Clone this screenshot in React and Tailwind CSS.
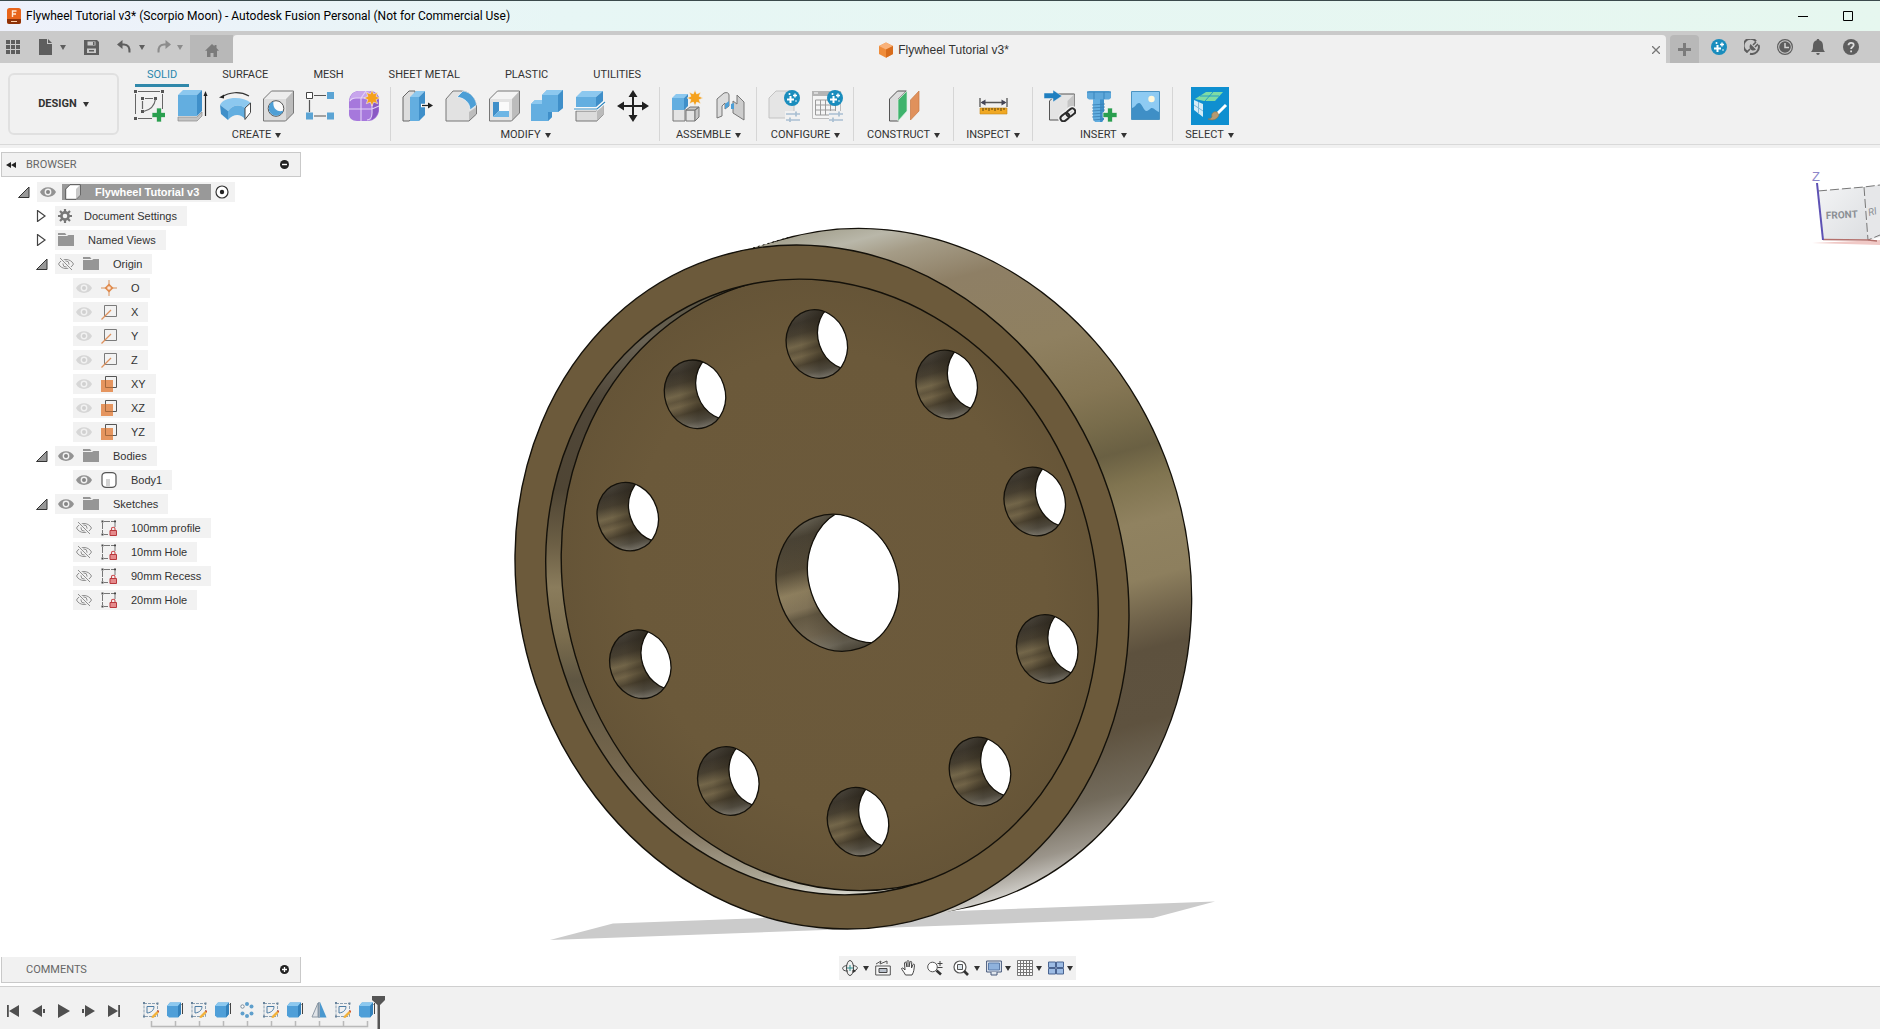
import { useState } from "react";

const BLUE = "#63aee0";
const BLUE_TOP = "#8cc8ef";
const BLUE_SIDE = "#3f8fc9";

function Caret({ className = "text-[#333]" }) {
  return (
    <svg viewBox="0 0 6 5" className={`h-[5px] w-[6px] shrink-0 ${className}`} fill="currentColor">
      <path d="M0 0h6L3 5z" />
    </svg>
  );
}

function Icon({ size = "size-8", box = 32, children }) {
  return (
    <svg viewBox={`0 0 ${box} ${box}`} className={`${size} shrink-0`} fill="none">
      {children}
    </svg>
  );
}

const Star = ({ x, y }) => (
  <g transform={`translate(${x} ${y})`}>
    <path
      d="M0-8 1.7-4.1 5.7-5.7 4.1-1.7 8 0 4.1 1.7 5.7 5.7 1.7 4.1 0 8-1.7 4.1-5.7 5.7-4.1 1.7-8 0-4.1-1.7-5.7-5.7-1.7-4.1z"
      fill="#f5a11c"
      stroke="#f1f1f1"
      strokeWidth=".6"
    />
  </g>
);

const Plus = ({ x, y }) => (
  <path
    transform={`translate(${x} ${y})`}
    d="M-2.5-7h5v4.500h4.500v5h-4.500v4.500h-5v-4.500h-4.500v-5h4.500z"
    fill="#2a9f4f"
    stroke="#f1f1f1"
    strokeWidth=".7"
  />
);

const Sparkle = ({ x, y }) => (
  <g transform={`translate(${x} ${y})`}>
    <circle r="8" fill="#1a8dbd" />
    <path d="M-1.500-2v7M-5 1.500h7" stroke="#fff" strokeWidth="2" />
    <path d="M3-4.500v4M1-2.500h4" stroke="#fff" strokeWidth="1.400" />
    <circle cx="-2.500" cy="-4" r="1" fill="#fff" />
    <circle cx="4" cy="3" r=".8" fill="#fff" />
  </g>
);

const Sliders = () => (
  <path d="M18 24h14M18 30h14M28 21.500v5M22 27.500v5" stroke="#a9bfd2" strokeWidth="1.700" />
);

/* toolbar icons */
const CreateSketch = () => (
  <Icon>
    <path d="M5 1.500h22M2.500 4v20M29.500 4v15M5 28.500h14" stroke="#666" strokeWidth="1" />
    <path d="M1 0h3v3H1zM28 0h3v3h-3zM1 27h3v3H1zM8 7h3v3H8zM21 7h3v3h-3zM8 20h3v3H8z" fill="#555" />
    <path d="M12 8.500h8M9.500 11v8M22.500 9c-1 7-5 11-12 12.500" stroke="#666" strokeWidth="1.2" />
    <Plus x={26} y={25} />
  </Icon>
);

const Extrude = () => (
  <Icon>
    <path d="m2 27 19 0 5-5v4l-5 5H2z" fill="#c3c3c3" stroke="#8a8a8a" strokeWidth=".7" />
    <path d="M2 5h19v21H2z" fill={BLUE} />
    <path d="m2 5 5-5h19l-5 5z" fill={BLUE_TOP} />
    <path d="m21 5 5-5v21l-5 5z" fill={BLUE_SIDE} />
    <path d="M29.500 26V5" stroke="#222" strokeWidth="1.200" />
    <path d="m27.500 6 2-5 2 5z" fill="#222" />
  </Icon>
);

const Revolve = () => (
  <Icon>
    <path d="M3 7c7-5 18-6 27-1" stroke="#333" strokeWidth="1.200" />
    <path d="m0 7.500 5-3 0 4z" fill="#222" />
    <path d="M1 15c3-8 22-10 31-2l-6 5c-6-4-12-3-17 3z" fill={BLUE_TOP} />
    <path d="m1 15 8 6v9L2 24z" fill={BLUE_SIDE} />
    <path d="M9 21c5-6 11-7 17-3v11c-5-6-12-5-17 1z" fill={BLUE} />
    <path d="m26 18 5.500-5v9.500l-5.500 7z" fill="#fff" stroke="#444" />
  </Icon>
);

const Hole = () => (
  <Icon>
    <path d="m1.500 9 8-8h22l-8 7.500z" fill="#ededed" />
    <path d="m24 9 7.500-8v22l-7.500 8z" fill="#bcbcbc" />
    <path d="M1.500 9H24v22H1.500z" fill="#dcdcdc" />
    <path d="m1.500 9 8-8h22v22l-8 8h-22z" stroke="#777" />
    <circle cx="14" cy="18.500" r="7.800" fill="#fafafa" stroke="#555" />
    <path d="M11.500 11.200a7.500 7.500 0 1 0 9.800 9.500c-6 2-11-2.500-9.800-9.500z" fill="#4d9fd6" />
  </Icon>
);

const Pattern = () => (
  <Icon>
    <path d="M9 5.500h12M4.500 10v12M9 26h12" stroke="#555" strokeWidth="1.200" />
    <path d="M1.500 2.500h6v6h-6z" fill="#fff" stroke="#444" />
    <path d="M22 2h7v7h-7zM1 22.500h7v7H1zM22 22.500h7v7h-7z" fill="#5ba4d4" />
  </Icon>
);

const Form = () => (
  <Icon>
    <path d="M1 12c0-6 3-10 9-11h12c5 0 9 3 9 9v10c0 6-5 11-11 11H9c-5 0-8-3-8-7z" fill="#a678dc" />
    <path d="M1.500 12c0-6 3-10 9-11h12l-4 7H8c-3 0-5 2-6.500 4z" fill="#c7a5ec" />
    <path d="M24 11c3-1 5-3 6.500-5v15c-1 4-3 7-7 9z" fill="#8a58c4" />
    <path d="M2 11c1-2 3-3 6-3h11c4 0 5 2 5 5v10c0 4-2 7-5 7M13 8v23M1 19h23l7-3M13 8l5-7" stroke="#e4d3f7" strokeWidth="1.100" />
    <Star x={24} y={8} />
  </Icon>
);

const PressPull = () => (
  <Icon>
    <path d="m1 7 6-6h6v26l-6 4H1z" fill="#ddd" stroke="#666" />
    <path d="M8 7h9v24H8z" fill={BLUE} />
    <path d="m8 7 6-6h9l-6 6z" fill={BLUE_TOP} />
    <path d="m17 7 6-6v24l-6 6z" fill={BLUE_SIDE} />
    <path d="M19 15.500h7" stroke="#fff" strokeWidth="3.500" />
    <path d="M20 15.500h7" stroke="#222" strokeWidth="1.300" />
    <path d="m26 12.500 5 3-5 3z" fill="#222" />
  </Icon>
);

const Fillet = () => (
  <Icon>
    <path d="M1 31V9l7-8h8c9 0 15 8 15.500 16v7L24 31z" fill="#e2e2e2" />
    <path d="m24 31 7.500-7v-7L24 22z" fill="#bdbdbd" />
    <path d="M1 31V9l7-8h8c9 0 15 8 15.500 16v7L24 31z" stroke="#777" />
    <path d="m12 7 6-6c8 1 13 8 13.500 14L25 20C25 12 19 8 12 7z" fill="#4d9fd6" stroke="#fff" strokeWidth=".6" />
  </Icon>
);

const Shell = () => (
  <Icon>
    <path d="m1.500 9 8-8h22l-8 8z" fill="#f4f4f4" />
    <path d="m24 9 7.500-8v22L24 31z" fill="#bcbcbc" />
    <path d="M1.500 9H24v22H1.500z" fill="#e3e3e3" />
    <path d="m1.500 9 8-8h22v22l-8 8h-22z" stroke="#777" />
    <path d="M5 12h16v15H5z" fill="#fafafa" />
    <path d="m5 12 6 0v9l-6 6z" fill="#3f8fc9" />
    <path d="m5 27 6-6h10v6z" fill="#6db6e5" />
  </Icon>
);

const Combine = () => (
  <Icon>
    <path d="m0 14 4-4h7V5l5-5h16v18l-5 4h-6v5l-4 4H0z" fill={BLUE} />
    <path d="m11 5 5-5h16l-5 5zM0 14l4-4h7v4z" fill={BLUE_TOP} />
    <path d="m27 5 5-5v18l-5 4zM17 22h4v5l-4 4z" fill={BLUE_SIDE} />
  </Icon>
);

const SplitBody = () => (
  <Icon>
    <path d="M2 21h20l7-6v10l-6 6H2z" fill="#dcdcdc" stroke="#777" />
    <path d="m23 21 6-5v9l-6 6z" fill="#bbb" />
    <path d="M2 7h20v10H2z" fill={BLUE} />
    <path d="m2 7 6-6h21l-7 6z" fill={BLUE_TOP} />
    <path d="m22 7 7-6v10l-7 6z" fill={BLUE_SIDE} />
    <path d="M0 19h23l8-7" stroke="#fff" strokeWidth="3" />
    <path d="M0 19h23l8-7" stroke="#3187bd" strokeWidth="1.200" />
  </Icon>
);

const Move = () => (
  <Icon>
    <path d="M16 5v22M5 16h22" stroke="#222" strokeWidth="2" />
    <path d="m16 0 4.500 7h-9zM16 32l4.500-7h-9zM0 16l7-4.500v9zM32 16l-7-4.500v9z" fill="#222" />
  </Icon>
);

const NewComponent = () => (
  <Icon>
    <path d="M2 17h12v14H2zM15 20h9v11h-9z" fill="#e4e4e4" stroke="#777" />
    <path d="m15 20 4-3h9l-4 3zM24 20l4-3v10l-4 4z" fill="#c6c6c6" stroke="#777" />
    <path d="M1 8h12v12H1z" fill={BLUE} />
    <path d="m1 8 4-4h12l-4 4z" fill={BLUE_TOP} />
    <path d="m13 8 4-4v12l-4 4z" fill={BLUE_SIDE} />
    <Star x={24} y={8} />
  </Icon>
);

const Joint = () => (
  <Icon>
    <path d="M3 28V9l7-6c3-1 5 0 5 2v11l-4 3v-6l-3 3v10z" fill="#dcdcdc" stroke="#777" />
    <path d="m11 14 4-3v5l-4 3z" fill="#4d9fd6" />
    <path d="M30 30V12l-7-7v9l-4-3v12z" fill="#cdcdcd" stroke="#777" />
    <path d="m17 14 3-1v6l-3 0z" fill="#4d9fd6" />
  </Icon>
);

const ConfigureBody = () => (
  <Icon>
    <path d="M1 28V8l7-7h18v20l-7 7z" fill="#e5e5e5" stroke="#c3c3c3" />
    <Sparkle x={24} y={8} />
    <path d="M17 21h15v11H17z" fill="#f1f1f1" />
    <Sliders />
  </Icon>
);

const ConfigureTable = () => (
  <Icon>
    <path d="M1.500 1.500h28v27h-28z" fill="#f5f5f5" stroke="#bdbdbd" />
    <path d="M1 1h29v5H1z" fill="#b5b5b5" />
    <path d="M3 3h4" stroke="#fff" />
    <path d="M4.500 10h20v15h-20zM4.500 15h20M4.500 20h20M9.500 10v15M14.500 10v15M19.500 10v15" stroke="#9b9b9b" />
    <Sparkle x={24} y={8} />
    <path d="M18 21h14v11H18z" fill="#f1f1f1" />
    <Sliders />
  </Icon>
);

const OffsetPlane = () => (
  <Icon>
    <path d="M1.500 31V9l8-8h9l-8 8v22z" fill="#ddd" stroke="#555" />
    <path d="m10 10 9-9v20l-9 10z" fill="#3fb36c" stroke="#d8f0e0" strokeWidth=".7" />
    <path d="m22.500 10 8.500-9v20l-8.500 9z" fill="#e0915c" stroke="#c77842" strokeWidth=".7" />
  </Icon>
);

const Measure = () => (
  <Icon>
    <path d="M3 8v9M30 8v9M5 12.500h23" stroke="#555" strokeWidth="1.300" />
    <path d="m3.500 12.500 5-3v6zM29.500 12.500l-5-3v6z" fill="#445" />
    <path d="M3 18h27v6H3z" fill="#f0a823" stroke="#c8861a" strokeWidth=".6" />
    <path d="M6 18v3M9 18v2M12 18v3M15 18v2M18 18v3M21 18v2M24 18v3M27 18v2" stroke="#5a430f" />
  </Icon>
);

const InsertLink = () => (
  <Icon>
    <path d="m5.500 11 7-7h18v18l-7 8h-18z" fill="#e4e4e4" stroke="#555" />
    <path d="m23.500 11 7-7v18l-7 8z" fill="#c5c5c5" />
    <path d="M0 3h9V0l9 6-9 6V8.500H0z" fill="#1f7fc0" stroke="#f1f1f1" strokeWidth=".5" />
    <g transform="rotate(-38 24 25)" stroke="#f1f1f1" strokeWidth="5">
      <rect x="15.500" y="21.800" width="9" height="6" rx="3" />
      <rect x="23.500" y="21.800" width="9" height="6" rx="3" />
    </g>
    <g transform="rotate(-38 24 25)" stroke="#2b2b2b" strokeWidth="2">
      <rect x="15.500" y="21.800" width="9.500" height="6" rx="3" />
      <rect x="23" y="21.800" width="9.500" height="6" rx="3" />
    </g>
  </Icon>
);

const Fastener = () => (
  <Icon>
    <path d="M6 9h11v20l-2 3H8l-2-3z" fill={BLUE} />
    <path d="M13 9h4v20l-2 3h-2z" fill={BLUE_SIDE} />
    <path d="m5 15 13-1M5 18l13-1M5 21l13-1M5 24l13-1M5 27l13-1M6 30l11-1" stroke="#3a7fb2" strokeWidth=".8" />
    <path d="m0 2 2-1h20l2 1v6l-2 1.500H2L0 8z" fill="#5fa8da" />
    <path d="M0 2h24M7 2v7M17 2v7" stroke="#3a86bd" />
    <Plus x={23} y={25} />
  </Icon>
);

const InsertImage = () => (
  <Icon>
    <path d="M1.500 1.500h28v28h-28z" fill="#8ecbf3" stroke="#4b93c2" />
    <path d="M2 18c4-1 4-5 7-5s5 9 8 8 3-3 5-3 4 3 7 4v7H2z" fill="#3f8fc6" />
    <circle cx="21.500" cy="9" r="3.200" fill="#fff8dc" />
  </Icon>
);

const SelectTool = () => (
  <Icon size="size-[38px]" box={38}>
    <path d="M0 0h38v38H0z" fill="#0f8fd0" />
    <path d="m4 12 11-7h17l-8 9H13z" fill="#7fdca4" />
    <path d="m9 9 19 0M22 5l-8 9" stroke="#0f8fd0" strokeWidth=".8" />
    <path d="m3 13 9 4v13l-9-7z" fill="#d5ecf7" />
    <path d="m3 18 9 6M7.500 15v12" stroke="#7fb7d6" />
    <path d="M35 18 26 27" stroke="#fff" strokeWidth="3" />
    <path d="M26 25c-4-1-6 2-5 5-1 1-2 2-4 2 4 2 9 1 11-4z" fill="#b59a72" stroke="#8f7549" strokeWidth=".6" />
  </Icon>
);

const tabs = ["SOLID", "SURFACE", "MESH", "SHEET METAL", "PLASTIC", "UTILITIES"];

const WIDE = "pl-[11px] pr-[10px]";
const NARROW = "px-3";

const groups = [
  {
    label: "CREATE",
    pad: "pl-[5px] pr-[10px]",
    tools: [
      ["Create Sketch", CreateSketch],
      ["Extrude", Extrude],
      ["Revolve", Revolve],
      ["Hole", Hole],
      ["Rectangular Pattern", Pattern],
      ["Create Form", Form],
    ],
  },
  {
    label: "MODIFY",
    pad: WIDE,
    tools: [
      ["Press Pull", PressPull],
      ["Fillet", Fillet],
      ["Shell", Shell],
      ["Combine", Combine],
      ["Split Body", SplitBody],
      ["Move/Copy", Move],
    ],
  },
  { label: "ASSEMBLE", pad: WIDE, tools: [["New Component", NewComponent], ["Joint", Joint]] },
  { label: "CONFIGURE", pad: WIDE, tools: [["Create Configuration", ConfigureBody], ["Configuration Table", ConfigureTable]] },
  { label: "CONSTRUCT", pad: "px-[13px]", tools: [["Offset Plane", OffsetPlane]] },
  { label: "INSPECT", pad: NARROW, tools: [["Measure", Measure]] },
  { label: "INSERT", pad: WIDE, tools: [["Insert Derive", InsertLink], ["Insert Fastener", Fastener], ["Canvas", InsertImage]] },
  { label: "SELECT", pad: NARROW, tools: [["Select", SelectTool]] },
];

function TitleBar() {
  return (
    <header className="flex h-[31px] shrink-0 items-center border-t border-[#3b4a4c] bg-linear-to-r from-[#eef1fb] via-[#e7f6f5] via-30% to-[#e6f7ef] pr-[27px] pl-[7px]">
      <svg viewBox="0 0 14 16" className="mr-[5px] h-4 w-[14px]">
        <rect width="14" height="16" rx="2.500" fill="#e8641b" />
        <path d="M0 11h14v2.500A2.500 2.500 0 0 1 11.500 16h-9A2.500 2.500 0 0 1 0 13.500z" fill="#8f3208" />
        <path d="M5.500 9V3h4M5.500 6h3.500" stroke="#ffe9d6" strokeWidth="1.400" fill="none" />
        <path d="M4 13.500h6" stroke="#ffd1ad" />
      </svg>
      <h1 className="flex-1 font-['Roboto',sans-serif] text-[12px] leading-4 text-black">
        Flywheel Tutorial v3* (Scorpio Moon) - Autodesk Fusion Personal (Not for Commercial Use)
      </h1>
      <div className="flex gap-[35px] text-black">
        <button aria-label="Minimize">
          <Icon size="size-2.5" box={10}><path d="M0 5.500h10" stroke="currentColor" /></Icon>
        </button>
        <button aria-label="Maximize">
          <Icon size="size-2.5" box={10}><path d="M.5.500h9v9h-9z" stroke="currentColor" /></Icon>
        </button>
      </div>
    </header>
  );
}

function DocumentBar() {
  return (
    <div className="flex h-8 shrink-0 items-end bg-[#cacaca] text-[#5e5e5e]">
      <div className="flex w-[190px] shrink-0 items-center self-stretch pl-1.5">
        <button aria-label="Data Panel">
          <Icon size="size-[14px]" box={14}>
            <path d="M0 0h4v4H0zM5 0h4v4H5zM10 0h4v4h-4zM0 5h4v4H0zM5 5h4v4H5zM10 5h4v4h-4zM0 10h4v4H0zM5 10h4v4H5zM10 10h4v4h-4z" fill="currentColor" />
          </Icon>
        </button>
        <button aria-label="File" className="ml-[18px] flex items-center gap-1.5">
          <Icon size="size-4" box={16}>
            <path d="M1 0h8v5h5v11H1z" fill="currentColor" />
            <path d="m10 0 4 4h-4z" fill="currentColor" />
          </Icon>
          <Caret className="text-[#5e5e5e]" />
        </button>
        <button aria-label="Save" className="ml-[18px]">
          <Icon size="size-[15px]" box={15}>
            <path fillRule="evenodd" d="M0 0h13l2 2v13H0zM3.500 1.500v4h8v-4zM3 8.500V13h9V8.500zM9 2h1.500v3H9zM5 10h5v1.500H5z" fill="currentColor" />
          </Icon>
        </button>
        <button aria-label="Undo" className="ml-[18px] flex items-center gap-2">
          <Icon size="size-[14px]" box={14}>
            <path d="M3 4.500h4c4 0 6 3 5.500 8" stroke="currentColor" strokeWidth="2" />
            <path d="M0 4.500 5.500 0v9z" fill="currentColor" />
          </Icon>
          <Caret className="text-[#5e5e5e]" />
        </button>
        <button aria-label="Redo" className="ml-3 flex items-center gap-1.5 text-[#8c8c8c]">
          <Icon size="size-[14px]" box={14}>
            <path d="M11 4.500H7c-4 0-6 3-5.500 8" stroke="currentColor" strokeWidth="2" />
            <path d="M14 4.500 8.500 0v9z" fill="currentColor" />
          </Icon>
          <Caret className="text-[#8c8c8c]" />
        </button>
      </div>
      <button aria-label="Home" className="flex h-7 w-[43px] items-center justify-center bg-[#b8b8b8] pt-1 text-[#7b7b7b]">
        <Icon size="size-[14px]" box={14}>
          <path d="M7 0l2.500 2.300V1h2v3L14 6.700h-2V13H8.500V9h-3v4H2V6.700H0z" fill="currentColor" />
        </Icon>
      </button>
      <div className="flex h-7 min-w-0 flex-1 items-center rounded-t-sm bg-[#f1f1f1] pt-0.5 pr-1.5 pl-0.5">
        <div className="flex flex-1 items-center justify-center gap-1 text-[12px] leading-4 text-[#333]">
          <Icon size="size-4" box={16}>
            <path d="m1 4 7-3.500L15 4v8l-7 3.700L1 12z" fill="#ef8c3a" />
            <path d="m1 4 7-3.500L15 4 8 7.500z" fill="#f9b27a" />
            <path d="m8 7.500 7-3.500v8l-7 3.700z" fill="#d86c1c" />
          </Icon>
          <span>Flywheel Tutorial v3*</span>
        </div>
        <button aria-label="Close tab" className="text-[#777]">
          <Icon size="size-2" box={8}>
            <path d="m0 0 8 8M8 0 0 8" stroke="currentColor" strokeWidth="1.300" />
          </Icon>
        </button>
      </div>
      <button aria-label="New design" className="ml-1 flex h-7 w-[29px] items-center justify-center rounded-t-sm bg-[#b8b8b8] text-[#7b7b7b]">
        <Icon size="size-[13px]" box={13}>
          <path d="M6.500 0v13M0 6.500h13" stroke="currentColor" strokeWidth="3" />
        </Icon>
      </button>
      <div className="ml-3 flex items-center gap-[17px] self-stretch pr-[21px]">
        <button aria-label="Autodesk Assistant">
          <Icon size="size-4" box={16}><Sparkle x={8} y={8} /></Icon>
        </button>
        <button aria-label="Extensions">
          <Icon size="size-4" box={16}>
            <path d="M3.500 13A7 7 0 1 1 12 2.300M14.600 6A7 7 0 0 1 6 14.700" stroke="currentColor" strokeWidth="2" />
            <path d="M2.500 13.500 6 10M9 6l3-3M11 8l3-3" stroke="currentColor" strokeWidth="1.600" />
            <path d="m6.500 5 5.500 5.500c-3.500 3-8.500-1-5.500-5.500z" fill="currentColor" />
          </Icon>
        </button>
        <button aria-label="Job status">
          <Icon size="size-4" box={16}>
            <circle cx="8" cy="8" r="7.400" stroke="currentColor" strokeWidth="1.200" />
            <circle cx="8" cy="8" r="5.800" fill="currentColor" />
            <path d="M8 4v4.500h4" stroke="#d4d4d4" strokeWidth="1.500" />
          </Icon>
        </button>
        <button aria-label="Notifications">
          <Icon size="size-4" box={16}>
            <path d="M8 0c1 0 1.300.6 1.300 1.200C12 2 13 4 13 7c0 3 .5 4.500 2 6H1c1.500-1.500 2-3 2-6 0-3 1-5 3.700-5.800C6.700.6 7 0 8 0zM6.300 14h3.400c0 1.200-.7 2-1.700 2s-1.700-.8-1.700-2z" fill="currentColor" />
          </Icon>
        </button>
        <button aria-label="Help">
          <Icon size="size-4" box={16}>
            <circle cx="8" cy="8" r="8" fill="currentColor" />
            <path d="M5.500 6.300C5.500 3 10.700 3 10.700 6c0 1.900-2.600 2-2.600 4M8.100 11.500v1.700" stroke="#ddd" strokeWidth="1.800" />
          </Icon>
        </button>
      </div>
    </div>
  );
}

function Ribbon() {
  const [active, setActive] = useState("SOLID");

  return (
    <div className="flex h-[82px] shrink-0 border-b border-[#d9d9d9] bg-[#f1f1f1] font-['Roboto',sans-serif] text-[11px] leading-3 text-[#333]">
      <button className="mt-2.5 ml-2 flex h-[62px] w-[111px] shrink-0 items-center justify-center gap-1.5 rounded-md border-2 border-[#e0e0e0] font-bold">
        DESIGN
        <Caret />
      </button>
      <div className="ml-[9px] flex flex-col">
        <nav className="ml-[7px] flex h-6 gap-[21px]">
          {tabs.map((tab) => (
            <button
              key={tab}
              onClick={() => setActive(tab)}
              className={`flex items-center border-b-3 px-3 pt-0.5 ${
                active === tab ? "border-[#3088aa] text-[#2b87ad]" : "border-transparent"
              }`}
            >
              {tab}
            </button>
          ))}
        </nav>
        <div className="flex items-stretch">
          {groups.map((group, i) => (
            <div key={group.label} className={`flex h-[54px] flex-col items-center justify-between ${group.pad} ${i > 0 ? "border-l border-[#d6d6d6]" : ""}`}>
              <div className="flex h-9 items-center gap-[11px] pt-0.5">
                {group.tools.map(([name, Tool]) => (
                  <button key={name} aria-label={name}><Tool /></button>
                ))}
              </div>
              <button className="flex items-center gap-1 leading-3">
                {group.label}
                <Caret />
              </button>
            </div>
          ))}
        </div>
      </div>
    </div>
  );
}

/* browser tree icons */
const Eye = ({ faded }) => (
  <Icon size="size-4" box={16}>
    <path d="M0 8c3-6.500 13-6.500 16 0-3 6.500-13 6.500-16 0z" fill={faded ? "#d6d6d6" : "#939393"} />
    <circle cx="8" cy="8" r="3.400" fill="#f1f1f1" />
    <circle cx="8" cy="8" r="2" fill={faded ? "#d0d0d0" : "#858585"} />
  </Icon>
);

const EyeOff = () => (
  <Icon size="size-4" box={16}>
    <path d="M.5 8c3-6 12-6 15 0-3 6-12 6-15 0z" stroke="#8f8f8f" />
    <circle cx="8" cy="8" r="3" stroke="#8f8f8f" />
    <path d="m2 2 12 12" stroke="#f1f1f1" strokeWidth="3" />
    <path d="m2 2 12 12" stroke="#8f8f8f" />
  </Icon>
);

const Folder = () => (
  <Icon size="size-4" box={16}>
    <path d="M0 1h7l1.500 2H0zM0 4h9l1.500-1H16v11H0z" fill="#969696" />
  </Icon>
);

const Gear = () => (
  <Icon size="size-[14px]" box={14}>
    <circle cx="7" cy="7" r="3.600" stroke="#777" strokeWidth="2.600" />
    <path d="M7 0v3M7 11v3M0 7h3M11 7h3M2 2l2.200 2.200M9.800 9.800 12 12M12 2 9.800 4.200M4.200 9.800 2 12" stroke="#777" strokeWidth="2.200" />
  </Icon>
);

const Component = () => (
  <Icon size="size-4" box={16}>
    <path d="M.7 5 5 .7h10.300V11L11 15.300H.7z" fill="#fff" stroke="#555" strokeLinejoin="round" />
    <path d="m11 5 4-4v10l-4 4z" fill="#c9c9c9" />
  </Icon>
);

const OriginPoint = () => (
  <Icon size="size-4" box={16}>
    <path d="M8 0v16M0 8h16" stroke="#d8935f" />
    <path d="m8 3.500 4.500 4.500L8 12.500 3.500 8z" fill="#e08a4c" />
    <circle cx="8" cy="8" r="1.800" fill="#fbe6d6" />
  </Icon>
);

const Axis = () => (
  <Icon size="size-4" box={16}>
    <path d="M3.500 1.500h12v11h-12z" stroke="#7b7b7b" />
    <path d="M.5 15.500 10 6" stroke="#dd915c" strokeWidth="1.200" />
  </Icon>
);

const Plane = () => (
  <Icon size="size-4" box={16}>
    <path d="M0 4h12v12H0z" fill="#e5955f" />
    <path d="M4.500 4V.5h11v11H12" stroke="#555" />
    <path d="M4.500 4v7.500H12" stroke="#a4683c" />
  </Icon>
);

const Body = () => (
  <Icon size="size-4" box={16}>
    <path d="M1 4c0-2 2-3.300 4-3.300h6c2 0 4 1.300 4 3.300v8c0 2-2 3.300-4 3.300H5c-2 0-4-1.300-4-3.300z" fill="#fff" stroke="#555" strokeWidth="1.200" />
    <path d="M5 7h4v8H5z" fill="#d3d3d3" />
  </Icon>
);

const LockedSketch = () => (
  <Icon size="size-4" box={16}>
    <path d="M3 1.500h10M1.500 3v10M14 3v4M3 14.500h4" stroke="#777" strokeDasharray="6 1" />
    <path d="M.5.500h2v2h-2zM13 .5h2v2h-2zM.5 13.500h2v2h-2z" fill="#444" />
    <path d="M10.500 11V8.800c0-2 3.500-2 3.500 0V11" stroke="#c9474a" strokeWidth="1.100" />
    <path d="M9 10.500h6.500v5H9z" fill="#e58a8c" stroke="#b8393d" />
  </Icon>
);

const Expanded = () => (
  <Icon size="size-3" box={12}>
    <path d="M.5 11.500 11 1v10.500z" fill="#999" stroke="#333" />
  </Icon>
);

const Collapsed = () => (
  <Icon size="size-3" box={12}>
    <path d="M1.500.5 9 6l-7.500 5.500z" fill="#fff" stroke="#444" strokeWidth="1.200" />
  </Icon>
);

const tree = [
  { label: "Document Settings", level: 1, open: false, icon: Gear },
  { label: "Named Views", level: 1, open: false, icon: Folder },
  { label: "Origin", level: 1, open: true, eye: "off", icon: Folder },
  { label: "O", level: 2, eye: "faded", icon: OriginPoint },
  { label: "X", level: 2, eye: "faded", icon: Axis },
  { label: "Y", level: 2, eye: "faded", icon: Axis },
  { label: "Z", level: 2, eye: "faded", icon: Axis },
  { label: "XY", level: 2, eye: "faded", icon: Plane },
  { label: "XZ", level: 2, eye: "faded", icon: Plane },
  { label: "YZ", level: 2, eye: "faded", icon: Plane },
  { label: "Bodies", level: 1, open: true, eye: "on", icon: Folder },
  { label: "Body1", level: 2, eye: "on", icon: Body },
  { label: "Sketches", level: 1, open: true, eye: "on", icon: Folder },
  { label: "100mm profile", level: 2, eye: "off", icon: LockedSketch },
  { label: "10mm Hole", level: 2, eye: "off", icon: LockedSketch },
  { label: "90mm Recess", level: 2, eye: "off", icon: LockedSketch },
  { label: "20mm Hole", level: 2, eye: "off", icon: LockedSketch },
];

function TreeRow({ item }) {
  const ItemIcon = item.icon;
  return (
    <li className={`flex items-center ${item.level === 1 ? "pl-9" : "pl-[73px]"}`}>
      {item.level === 1 && (
        <button aria-label={`Toggle ${item.label}`} className="mr-[7px]">
          {item.open ? <Expanded /> : <Collapsed />}
        </button>
      )}
      <div className="flex h-5 items-center bg-[#f2f2f2] pr-2.5 pl-[3px]">
        {item.eye && (
          <button aria-label={`Visibility of ${item.label}`} className="mr-[9px]">
            {item.eye === "off" ? <EyeOff /> : <Eye faded={item.eye === "faded"} />}
          </button>
        )}
        <ItemIcon />
        <span className={item.icon === Gear ? "ml-3" : "ml-3.5"}>{item.label}</span>
      </div>
    </li>
  );
}

function BrowserPanel() {
  return (
    <section className="pt-1 pl-px text-[11px] leading-4 text-[#333]">
      <div className="flex h-[25px] w-[300px] items-center border border-[#c9c9c9] bg-[#f1f1f1] pr-[11px] pl-1">
        <button aria-label="Collapse browser">
          <svg viewBox="0 0 10 6" className="h-1.5 w-2.5" fill="#222"><path d="M0 3l5-3v6zM5 3l5-3v6z" /></svg>
        </button>
        <h2 className="ml-2.5 flex-1 font-['Roboto',sans-serif] text-[11px] text-[#666]">BROWSER</h2>
        <button aria-label="Minimize browser">
          <Icon size="size-[9px]" box={9}>
            <circle cx="4.500" cy="4.500" r="4.500" fill="#222" />
            <path d="M2 4.500h5" stroke="#fff" strokeWidth="1.400" />
          </Icon>
        </button>
      </div>
      <ul className="mt-[5px] -ml-px flex flex-col gap-1">
        <li className="flex items-center pl-[18px]">
          <button aria-label="Toggle Flywheel Tutorial v3" className="mr-[7px]"><Expanded /></button>
          <div className="flex h-5 items-center bg-[#f2f2f2] pr-1.5 pl-[3px]">
            <button aria-label="Visibility of Flywheel Tutorial v3" className="mr-1.5"><Eye /></button>
            <div className="flex h-4 items-center bg-[#999] pr-3 pl-[3px] font-bold text-white">
              <Component />
              <span className="ml-3.5">Flywheel Tutorial v3</span>
            </div>
            <button aria-label="Activate component" className="ml-1">
              <Icon size="size-[14px]" box={14}>
                <circle cx="7" cy="7" r="6" stroke="#333" strokeWidth="1.200" fill="#fff" />
                <circle cx="7" cy="7" r="2.200" fill="#222" />
              </Icon>
            </button>
          </div>
        </li>
        {tree.map((item) => (
          <TreeRow key={item.label} item={item} />
        ))}
      </ul>
    </section>
  );
}

function CommentsPanel() {
  return (
    <section className="mb-[3px] ml-px flex h-[26px] w-[300px] items-center border border-t-0 border-[#c9c9c9] bg-[#f1f1f1] pr-[11px] pl-6">
      <h2 className="flex-1 font-['Roboto',sans-serif] text-[11px] leading-4 text-[#666]">COMMENTS</h2>
      <button aria-label="Open comments">
        <Icon size="size-[9px]" box={9}>
          <circle cx="4.500" cy="4.500" r="4.500" fill="#222" />
          <path d="M2 4.500h5M4.500 2v5" stroke="#fff" strokeWidth="1.300" />
        </Icon>
      </button>
    </section>
  );
}

// every circle on the part projects to the same tilted ellipse, r is the share of the 100mm outline
function Ring({ cx, cy, r, ...props }) {
  return <ellipse rx={346.2 * r} ry={302.3 * r} transform={`translate(${cx} ${cy}) rotate(71.5)`} {...props} />;
}

const holes = [
  [816.8, 344], [946.7, 384.5], [1034.7, 501.5], [1047.2, 649], [980, 771.5],
  [858, 821.7], [728.3, 781], [640.3, 664.2], [627.8, 516.6], [695, 394.3],
];

function Bore({ cx, cy, r, id, shade }) {
  return (
    <g>
      <clipPath id={id}><Ring cx={cx} cy={cy} r={r} /></clipPath>
      <g clipPath={`url(#${id})`}>
        <rect x={cx - 307 * r} y={cy - 342 * r} width={614 * r} height={684 * r} fill={`url(#${shade})`} />
        <rect x={cx - 307 * r} y={cy - 342 * r} width={614 * r} height={684 * r} fill="url(#depth)" />
        <Ring cx={cx + 31.4} cy={cy - 8.5} r={r} fill="#fff" stroke="#14110a" strokeWidth="1.300" />
      </g>
      <Ring cx={cx} cy={cy} r={r} fill="none" stroke="#14110a" strokeWidth="1.300" />
    </g>
  );
}

function Flywheel() {
  return (
    <svg viewBox="0 148 1880 838" className="col-start-1 row-start-1 h-full w-full" role="img" aria-label="Flywheel model">
      <defs>
        <linearGradient id="side" gradientUnits="userSpaceOnUse" x1="727" y1="254" x2="908" y2="922">
          <stop offset="0" stopColor="#a5a290" />
          <stop offset=".03" stopColor="#b9b7a9" />
          <stop offset=".06" stopColor="#a59c87" />
          <stop offset=".12" stopColor="#8e7f65" />
          <stop offset=".24" stopColor="#8f8060" />
          <stop offset=".33" stopColor="#857654" />
          <stop offset=".38" stopColor="#786c4b" />
          <stop offset=".425" stopColor="#6a6043" />
          <stop offset=".47" stopColor="#807450" />
          <stop offset=".53" stopColor="#908260" />
          <stop offset=".61" stopColor="#8d7f5e" />
          <stop offset=".67" stopColor="#6f624a" />
          <stop offset=".71" stopColor="#5d513e" />
          <stop offset=".81" stopColor="#5e523f" />
          <stop offset=".9" stopColor="#736b5c" />
          <stop offset=".96" stopColor="#9b958b" />
          <stop offset="1" stopColor="#cfcdc8" />
        </linearGradient>
        <linearGradient id="wall" gradientUnits="userSpaceOnUse" x1="0" y1="280" x2="0" y2="895">
          <stop offset="0" stopColor="#55503f" />
          <stop offset=".1" stopColor="#6a6354" />
          <stop offset=".2" stopColor="#4f4638" />
          <stop offset=".34" stopColor="#4f4534" />
          <stop offset=".43" stopColor="#6c5f45" />
          <stop offset=".5" stopColor="#8a7c5c" />
          <stop offset=".58" stopColor="#7b6d4e" />
          <stop offset=".65" stopColor="#5f5642" />
          <stop offset=".77" stopColor="#72644b" />
          <stop offset=".9" stopColor="#857862" />
          <stop offset=".97" stopColor="#aaa594" />
          <stop offset="1" stopColor="#d8d7cf" />
        </linearGradient>
        <linearGradient id="bore" x1=".35" y1="0" x2=".6" y2="1">
          <stop offset="0" stopColor="#4a453c" />
          <stop offset=".15" stopColor="#3d372d" />
          <stop offset=".3" stopColor="#484031" />
          <stop offset=".46" stopColor="#75684b" />
          <stop offset=".54" stopColor="#62563e" />
          <stop offset=".62" stopColor="#75674a" />
          <stop offset=".74" stopColor="#514734" />
          <stop offset=".88" stopColor="#6f695b" />
          <stop offset="1" stopColor="#b5b1a6" />
        </linearGradient>
        <linearGradient id="boreMain" x1=".35" y1="0" x2=".6" y2="1">
          <stop offset="0" stopColor="#6b6658" />
          <stop offset=".12" stopColor="#4a4335" />
          <stop offset=".34" stopColor="#544a37" />
          <stop offset=".5" stopColor="#8f805f" />
          <stop offset=".62" stopColor="#84765a" />
          <stop offset=".68" stopColor="#665b45" />
          <stop offset=".82" stopColor="#776b55" />
          <stop offset=".93" stopColor="#8b8575" />
          <stop offset="1" stopColor="#6a6454" />
        </linearGradient>
        <linearGradient id="depth">
          <stop offset="0" stopColor="#1a150c" stopOpacity="0" />
          <stop offset=".25" stopColor="#1a150c" stopOpacity=".04" />
          <stop offset=".55" stopColor="#1a150c" stopOpacity=".38" />
          <stop offset="1" stopColor="#1a150c" stopOpacity=".45" />
        </linearGradient>
        <radialGradient id="floor">
          <stop offset="0" stopColor="#6c5a3c" />
          <stop offset=".75" stopColor="#6b593a" />
          <stop offset="1" stopColor="#655437" />
        </radialGradient>
        <linearGradient id="cubeFace" x1="0" y1="0" x2="1" y2="1">
          <stop offset="0" stopColor="#f3f4f5" />
          <stop offset="1" stopColor="#dcdee1" />
        </linearGradient>
        <clipPath id="recess"><Ring cx={822} cy={587} r={0.9} /></clipPath>
        <clipPath id="hull">
          <Ring cx={884} cy={571} r={1} />
          <path d="M726.800 254.300 788.800 238.300 979.200 903.700 917.200 919.700z" />
        </clipPath>
      </defs>

      {/* ground shadow */}
      <path d="m550 940 63-16.500 602-22-62 16.500z" fill="#cbcbcb" />

      {/* outer side, its outline shows only where the fill ends */}
      <Ring cx={884} cy={571} r={1} fill="none" stroke="#14110a" strokeWidth="2.600" />
      <rect x="515" y="225" width="680" height="710" fill="url(#side)" clipPath="url(#hull)" />
      <path d="m753 248 36-10.700" stroke="#14110a" strokeDasharray="2 3" />

      {/* front rim, recess wall and floor */}
      <Ring cx={822} cy={587} r={1} fill="#6c5a3b" stroke="#14110a" strokeWidth="1.400" />
      <g clipPath="url(#recess)">
        <rect x="545" y="278" width="555" height="620" fill="url(#wall)" />
        <Ring cx={837.5} cy={582.8} r={0.9} fill="url(#floor)" stroke="#14110a" strokeWidth="1.400" />
      </g>
      <Ring cx={822} cy={587} r={0.9} fill="none" stroke="#14110a" strokeWidth="1.400" />

      <Bore id="bore-center" cx={837.5} cy={582.8} r={0.2} shade="boreMain" />
      {holes.map(([x, y], i) => (
        <Bore key={i} id={`bore-${i}`} cx={x} cy={y} r={0.1} shade="bore" />
      ))}

      {/* view cube */}
      <path d="m1812 243 68-3v5z" fill="#f0c9c6" />
      <path d="m1818 191 46-4 4 53-45-1z" fill="url(#cubeFace)" />
      <path d="m1864 187 16-2v52l-12 3z" fill="#e6e7e9" />
      <path d="m1818 191 46-4 16-2M1864 187l4 53 12-5" fill="none" stroke="#777" strokeDasharray="9 3" />
      <path d="m1823 239.500 45 .5 9 1" stroke="#b3706c" strokeWidth="1.500" fill="none" />
      <path d="m1817 183 6 57" stroke="#5d51b4" strokeWidth="2" />
      <text x="1812" y="181" fill="#8d86c9" fontSize="13" fontFamily="Liberation Sans, sans-serif">Z</text>
      <text x="1826" y="219" fill="#8b8f94" fontSize="10" fontWeight="bold" fontFamily="Roboto, sans-serif" transform="rotate(-3 1826 219)">FRONT</text>
      <text x="1869" y="216" fill="#8b8f94" fontSize="10" fontStyle="italic" fontFamily="Roboto, sans-serif" transform="rotate(-14 1869 216)">RI</text>
    </svg>
  );
}

const navTools = [
  {
    name: "Orbit",
    menu: "gap-[5px] mr-1.5",
    art: (
      <>
        <ellipse cx="8" cy="8" rx="3.500" ry="7.500" stroke="#444" />
        <path d="M5 5.500C1 6 0 8 1 9.500S5 11 6 11M11 5.500c4 .5 5 2 4 3.500s-3 2-5 2" stroke="#444" />
        <path d="M8 5v6M5 8h6" stroke="#2c8a8a" />
        <path d="m11 9 0 4 3-2z" fill="#333" />
      </>
    ),
  },
  {
    name: "Look At",
    art: (
      <>
        <path d="M.7 6h14.600v9H.7z" fill="#f7f7f7" stroke="#555" />
        <path d="M4 8.500h8v4H4z" fill="#b9c1cc" stroke="#444" />
        <path d="m1 4 5-3-1 3 7-3v3" stroke="#555" />
      </>
    ),
  },
  {
    name: "Pan",
    art: (
      <path
        d="M4.500 15C3 12 1 10 .5 8.500c.5-1 2-.5 3.500 1.500L3.500 3c.3-1.200 1.500-1 1.700 0L6 7V1.500C6.300.3 7.700.3 8 1.500V7l1-5c.4-1 1.600-.8 1.700.3L10.500 8l1.500-3.500c.7-.8 1.700-.3 1.500.7C13 9 13 12 11 15z"
        fill="#fbfbfb"
        stroke="#444"
      />
    ),
  },
  {
    name: "Zoom",
    art: (
      <>
        <circle cx="5.500" cy="7" r="4.800" fill="#fff" stroke="#555" />
        <path d="m9.500 10.500 4.500 4" stroke="#333" strokeWidth="2.600" />
        <path d="M13 1v5M10.500 3.500h5M10.500 7.500h5" stroke="#444" />
      </>
    ),
  },
  {
    name: "Fit",
    menu: "gap-[5px] mr-1.5",
    art: (
      <>
        <circle cx="7" cy="7" r="6" fill="#fff" stroke="#555" strokeWidth="1.200" />
        <path d="M4.500 4.500h5v5h-5z" fill="#dfe8ee" stroke="#555" />
        <path d="m11 11 4 4" stroke="#333" strokeWidth="2.600" />
      </>
    ),
  },
  {
    name: "Display Settings",
    menu: "gap-[3px] mr-1.5",
    art: (
      <>
        <path d="M.6 1h14.800v11H.6z" fill="#e8eef5" stroke="#47597a" />
        <path d="M2.500 3h11v7h-11z" fill="#8fb2dd" stroke="#5b7ba8" />
        <path d="M5 12v3h6v-3" fill="#dfe5ec" stroke="#47597a" />
      </>
    ),
  },
  {
    name: "Grid and Snaps",
    menu: "gap-[3px] mr-1.5",
    art: <path d="M.5.500h15v15H.5zM3.500.5v15M6.500.5v15M9.500.5v15M12.500.5v15M.5 3.500h15M.5 6.500h15M.5 9.500h15M.5 12.500h15" stroke="#777" fill="#fafafa" />,
  },
  {
    name: "Viewports",
    menu: "gap-[3px]",
    art: (
      <path d="M.5 2h7v5.500h-7zM8.500 2h7v5.500h-7zM.5 8.500h7V14h-7zM8.500 8.500h7V14h-7z" fill="#9dbce4" stroke="#4a6491" />
    ),
  },
];

function NavBar() {
  return (
    <div className="z-10 col-start-1 row-start-1 mb-1.5 ml-[34px] flex h-6 items-center self-end justify-self-center bg-[#f1f1f1] pr-[3px] pl-[3px]">
      {navTools.map((tool) => (
        <button key={tool.name} aria-label={tool.name} className={`flex items-center ${tool.menu ?? "mr-2.5"}`}>
          <Icon size="size-4" box={16}>{tool.art}</Icon>
          {tool.menu && <Caret />}
        </button>
      ))}
    </div>
  );
}

/* timeline features */
const SketchFeature = () => (
  <Icon size="size-4" box={16}>
    <path d="M1 1.500h13.500v13H1z" stroke="#8ba0b3" strokeDasharray="3 1" />
    <path d="M4 4.500h7c0 3-2 6-7 6.500z" stroke="#4b7ba3" />
    <path d="M0 0h2v2H0zM13.500.500h2v2h-2zM0 13.500h2v2H0z" fill="#69839b" />
    <path d="m9 14 5-5 1.700 1.700-5 5L8.500 16z" fill="#f2b23c" />
    <path d="m14 9 1-1 1.500 1.500-.8 1.200z" fill="#d4572e" />
  </Icon>
);

const ExtrudeFeature = () => (
  <Icon size="size-4" box={16}>
    <path d="M0 4 3 .5h11V12l-3 3.500H2l-2-2z" fill="#4f9fd8" />
    <path d="M0 4 3 .5h11L11 4z" fill="#8cc8ef" />
    <path d="m11 4 3-3.500V12l-3 3.500z" fill="#3381bb" />
    <path d="M15.500 1v11M14.500 2.500h2" stroke="#444" />
  </Icon>
);

const PatternFeature = () => (
  <Icon size="size-4" box={16}>
    {[[8, 2], [12.500, 4.500], [12.500, 11.500], [8, 14], [3.500, 11.500]].map(([x, y]) => (
      <circle key={`${x}-${y}`} cx={x} cy={y} r="2" fill="#5f9fcc" />
    ))}
    <circle cx="3.500" cy="4.500" r="1.700" stroke="#7c8b98" fill="#fff" />
  </Icon>
);

const MirrorFeature = () => (
  <Icon size="size-4" box={16}>
    <path d="M7 1v14H1z" fill="#dfe3e8" stroke="#8d99a5" />
    <path d="M9 0v15.500h6.500z" fill="#4a98cf" />
    <path d="M8 0v16" stroke="#4d6b85" />
  </Icon>
);

const features = [
  ["Sketch1", SketchFeature],
  ["Extrude1", ExtrudeFeature],
  ["Sketch2", SketchFeature],
  ["Extrude2", ExtrudeFeature],
  ["CircularPattern1", PatternFeature],
  ["Sketch3", SketchFeature],
  ["Extrude3", ExtrudeFeature],
  ["Mirror1", MirrorFeature],
  ["Sketch4", SketchFeature],
  ["Extrude4", ExtrudeFeature],
];

const playback = [
  ["Go to start", "M0 1h1.800v12H0zM12 1v12L2 7z"],
  ["Step back", "M0 7l10-6v12zM11 5h2v4h-2z"],
  ["Play", "M1 0l12 7-12 7z"],
  ["Step forward", "M13 7 3 1v12zM0 5h2v4H0z"],
  ["Go to end", "M1 1v12l10-6zM11.200 1H13v12h-1.800z"],
];

function Timeline() {
  return (
    <footer className="flex h-[43px] shrink-0 items-start border-t border-[#cfcfcf] bg-[#f1f1f1]">
      <div className="flex w-[143px] gap-[11px] pt-[17px] pl-[7px]">
        {playback.map(([name, d]) => (
          <button key={name} aria-label={name}>
            <Icon size="size-[14px]" box={14}><path d={d} fill="#4f4f4f" /></Icon>
          </button>
        ))}
      </div>
      <div className="flex pt-[15px]">
        {features.map(([name, Feature], i) => (
          <button key={name} aria-label={name} className="flex w-6 flex-col">
            <Feature />
            <svg viewBox="0 0 24 8" className="mt-0.5 h-2 w-6" fill="none" stroke="#b9b9b9">
              <path d={i === 0 ? "M8.500 1v5.500H24" : i === features.length - 1 ? "M8.500 1v5.500H0" : "M8.500 1v5.500M0 6.500h24"} strokeWidth="1.500" />
            </svg>
          </button>
        ))}
      </div>
      <svg viewBox="0 0 13 33" className="-ml-[11px] mt-[9px] h-[33px] w-[13px]">
        <path d="M0 0h13v4L8 9v24H5.500V9L0 4z" fill="#555" />
      </svg>
    </footer>
  );
}

export default function App() {
  return (
    <div className="flex h-screen flex-col overflow-hidden bg-[#f1f1f1] font-['Liberation_Sans',sans-serif]">
      <TitleBar />
      <DocumentBar />
      <Ribbon />
      <main className="mt-[3px] grid min-h-0 flex-1 grid-cols-1 grid-rows-1 bg-white">
        <Flywheel />
        <aside className="z-10 col-start-1 row-start-1 flex flex-col justify-between justify-self-start">
          <BrowserPanel />
          <CommentsPanel />
        </aside>
        <NavBar />
      </main>
      <Timeline />
    </div>
  );
}
